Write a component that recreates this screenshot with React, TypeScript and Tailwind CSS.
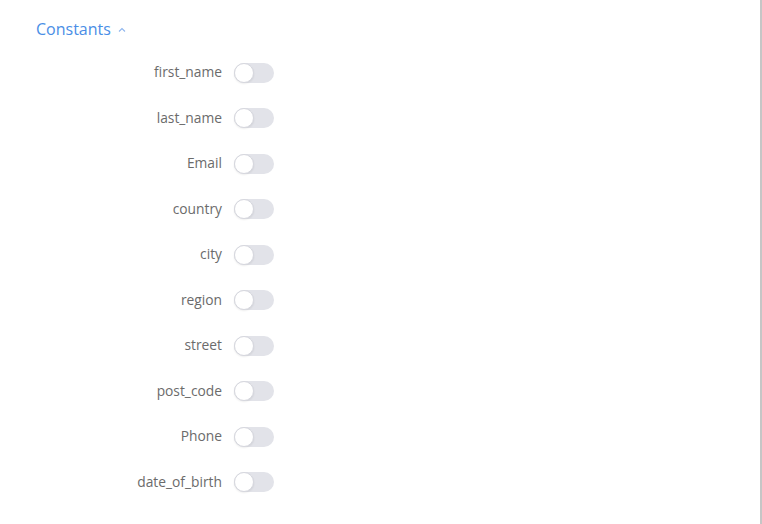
const fields = [
  "first_name",
  "last_name",
  "Email",
  "country",
  "city",
  "region",
  "street",
  "post_code",
  "Phone",
  "date_of_birth",
];

function Toggle() {
  return (
    <div className="relative h-5 w-10 rounded-full bg-[#e2e3e9]">
      <div className="absolute left-0 top-0 h-5 w-5 rounded-full border border-[#d6d7de] bg-white shadow-[0_1px_2px_rgba(0,0,0,0.08)]" />
    </div>
  );
}

export default function App() {
  return (
    <div className="h-[524px] w-[762px] overflow-hidden border-r-2 border-[#c6c6c6] bg-white font-['Open_Sans',sans-serif]">
      <div className="flex items-center gap-[6px] pl-[36px] pt-[18px] text-[16px] leading-[22px] text-[#4a8ee6]">
        <span>Constants</span>
        <svg width="10" height="10" viewBox="0 0 10 10" className="mt-[1px] text-[#8fb6ee]">
          <path d="M2 6.5 L5 3.5 L8 6.5" fill="none" stroke="currentColor" strokeWidth="1.1" />
        </svg>
      </div>
      <div className="mt-[10px] flex flex-col">
        {fields.map((f) => (
          <div key={f} className="flex h-[45.5px] items-center">
            <span className="w-[222px] text-right text-[13.8px] text-[#6b6b6b]">{f}</span>
            <div className="ml-3">
              <Toggle />
            </div>
          </div>
        ))}
      </div>
    </div>
  );
}
